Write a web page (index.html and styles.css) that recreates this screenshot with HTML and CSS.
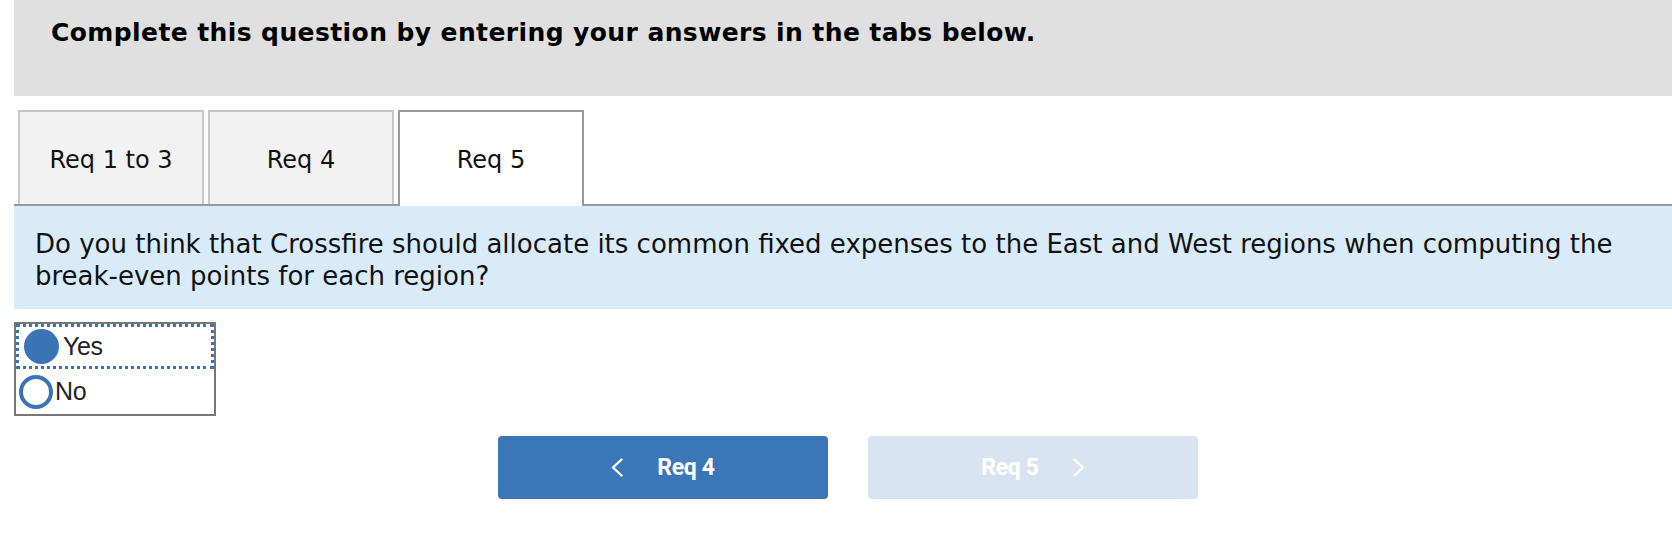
FILE: index.html
```html
<!DOCTYPE html>
<html lang="en">
<head>
<meta charset="utf-8">
<title>Req 5</title>
<link rel="stylesheet" href="styles.css">
</head>
<body>
<div class="page">
  <div class="banner">
    <h2 class="banner-title">Complete this question by entering your answers in the tabs below.</h2>
  </div>
  <div class="tabs">
    <div class="tab">Req 1 to 3</div>
    <div class="tab">Req 4</div>
    <div class="tab active">Req 5</div>
  </div>
  <div class="question">Do you think that Crossfire should allocate its common fixed expenses to the East and West regions when computing the break-even points for each region?</div>
  <div class="options">
    <div class="option focused"><span class="radio checked"></span><span class="opt-label">Yes</span></div>
    <div class="option"><span class="radio"></span><span class="opt-label">No</span></div>
  </div>
  <div class="nav">
    <button class="btn prev"><svg class="chev" width="12" height="19" viewBox="0 0 12 19"><polyline points="10.5,1.5 2,9.5 10.5,17.5" fill="none" stroke="#fff" stroke-width="2.4" stroke-linecap="round" stroke-linejoin="round"/></svg><span>Req 4</span></button>
    <button class="btn next" disabled><span>Req 5</span><svg class="chev" width="12" height="19" viewBox="0 0 12 19"><polyline points="1.5,1.5 10,9.5 1.5,17.5" fill="none" stroke="#fff" stroke-width="2.4" stroke-linecap="round" stroke-linejoin="round"/></svg></button>
  </div>
</div>
</body>
</html>
```
FILE: styles.css
```css
html, body {
  margin: 0;
  padding: 0;
  background: #fff;
}
.page {
  padding-left: 14px;
  font-family: "DejaVu Sans", Verdana, sans-serif;
  color: #111;
}
.banner {
  height: 96px;
  background: #e0e0e0;
  padding-left: 37px;
  box-sizing: border-box;
  padding-top: 18px;
}
.banner-title {
  margin: 0;
  font-size: 25px;
  letter-spacing: 0.4px;
  font-weight: bold;
  color: #000;
  line-height: 30px;
}
.tabs {
  margin-top: 14px;
  display: flex;
  gap: 4px;
  padding-left: 4px;
  border-bottom: 2px solid #999;
  height: 94px;
}
.tab {
  width: 186px;
  height: 94px;
  box-sizing: border-box;
  border: 2px solid #c8c8c8;
  border-bottom: none;
  background: #f2f2f2;
  display: flex;
  align-items: center;
  justify-content: center;
  font-size: 24px;
  color: #111;
  padding-top: 4px;
}
.tab.active {
  background: #fff;
  border-color: #999;
  height: 96px;
  padding-bottom: 2px;
}
.question {
  background: #d9ebf9;
  padding: 22px 21px 17px;
  font-size: 26px;
  line-height: 32px;
  height: 64px;
}
.options {
  margin-top: 13px;
  width: 202px;
  box-sizing: border-box;
  border: 2px solid #767676;
  font-family: "Liberation Sans", Arial, sans-serif;
}
.option {
  height: 45px;
  display: flex;
  align-items: center;
  font-size: 25px;
  color: #222;
}
.option.focused {
  outline: 3px dotted #3a74b7;
  outline-offset: -3px;
}
.radio {
  width: 34px;
  height: 34px;
  box-sizing: border-box;
  border: 4px solid #3a74b7;
  border-radius: 50%;
  margin-left: 3px;
  margin-right: 2px;
  flex: none;
}
.radio.checked {
  width: 35px;
  height: 35px;
  border: none;
  background: #3a74b7;
  margin-left: 8px;
  margin-right: 4px;
}
.opt-label {
  letter-spacing: -0.4px;
}
.nav {
  margin-top: 20px;
  display: flex;
  justify-content: center;
  gap: 40px;
  padding-left: 10px;
}
.btn {
  width: 330px;
  height: 63px;
  border: none;
  border-radius: 4px;
  display: flex;
  align-items: center;
  justify-content: center;
  gap: 34px;
  font-family: Roboto, "Liberation Sans", sans-serif;
  font-weight: bold;
  font-size: 23px;
  letter-spacing: -0.3px;
  color: #fff;
  padding: 0;
}
.btn.prev {
  background: #3b76b8;
}
.btn.next {
  background: #d8e4f1;
}
.chev {
  display: block;
}
```
